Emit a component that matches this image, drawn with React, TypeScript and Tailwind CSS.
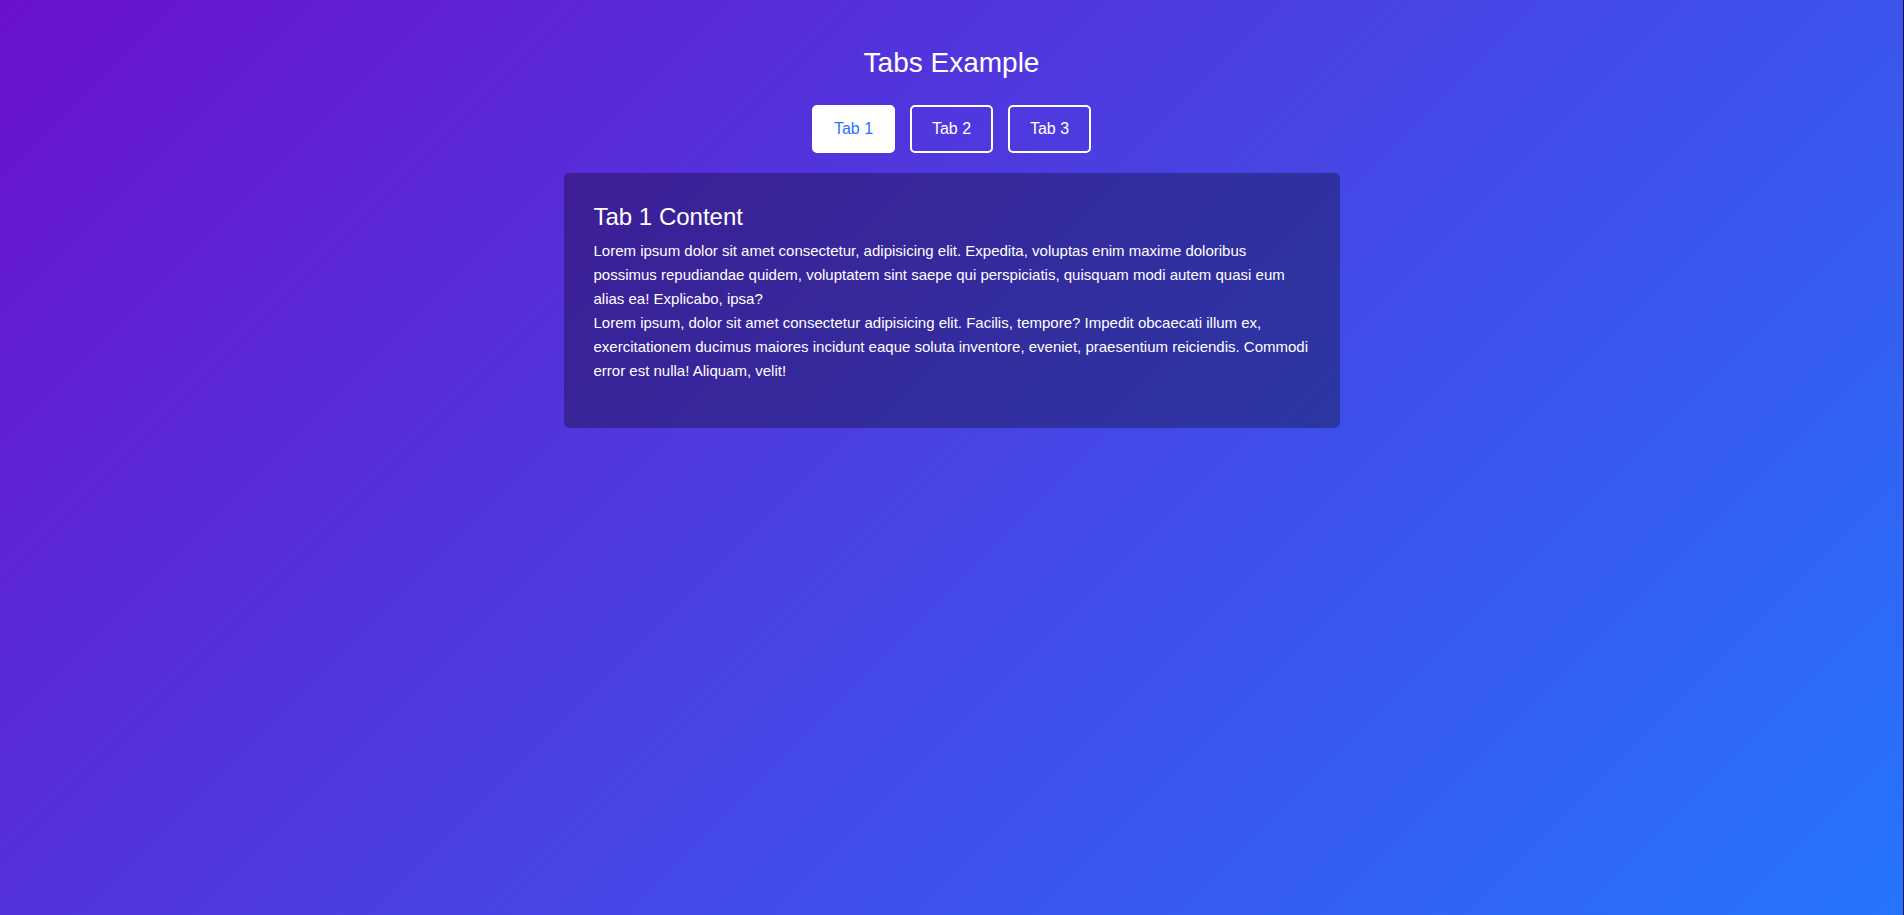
import React, { useState } from "react";

const tabs = [
  {
    title: "Tab 1 Content",
    lines: [
      "Lorem ipsum dolor sit amet consectetur, adipisicing elit. Expedita, voluptas enim maxime doloribus possimus repudiandae quidem, voluptatem sint saepe qui perspiciatis, quisquam modi autem quasi eum alias ea! Explicabo, ipsa?",
      "Lorem ipsum, dolor sit amet consectetur adipisicing elit. Facilis, tempore? Impedit obcaecati illum ex, exercitationem ducimus maiores incidunt eaque soluta inventore, eveniet, praesentium reiciendis. Commodi error est nulla! Aliquam, velit!",
    ],
  },
  {
    title: "Tab 2 Content",
    lines: [
      "Lorem ipsum dolor sit amet consectetur adipisicing elit. Quae, voluptatibus.",
    ],
  },
  {
    title: "Tab 3 Content",
    lines: [
      "Lorem ipsum dolor sit amet consectetur adipisicing elit. Dolorum, similique.",
    ],
  },
];

export default function App() {
  const [active, setActive] = useState(0);
  const t = tabs[active];
  return (
    <div
      className="min-h-screen w-full bg-[linear-gradient(135deg,#6a11cb,#2575fc)] border-r border-black/60 text-white pt-[46px] flex flex-col items-center"
      style={{ fontFamily: '"Liberation Sans", Arial, sans-serif' }}
    >
      <h1 className="text-[28px] leading-[34px] font-normal mb-[25px]">Tabs Example</h1>
      <div className="flex gap-[15px] mb-[20px]">
        {tabs.map((_, i) => (
          <button
            key={i}
            onClick={() => setActive(i)}
            className={
              i === active
                ? "w-[83px] h-[48px] text-center text-[16px] leading-[24px] rounded-[5px] border-2 border-white bg-white text-[#2575fc] cursor-pointer"
                : "w-[83px] h-[48px] text-center text-[16px] leading-[24px] rounded-[5px] border-2 border-white bg-transparent text-white cursor-pointer"
            }
          >
            Tab {i + 1}
          </button>
        ))}
      </div>
      <div className="w-[776px] rounded-[5px] bg-black/30 pt-[30px] px-[30px] pb-[45px]">
        <h2 className="text-[24px] leading-[28px] font-normal mb-[8px]">{t.title}</h2>
        <p className="text-[15px] leading-[24px]">
          {t.lines.map((l, i) => (
            <React.Fragment key={i}>
              {i > 0 && <br />}
              {l}
            </React.Fragment>
          ))}
        </p>
      </div>
    </div>
  );
}
